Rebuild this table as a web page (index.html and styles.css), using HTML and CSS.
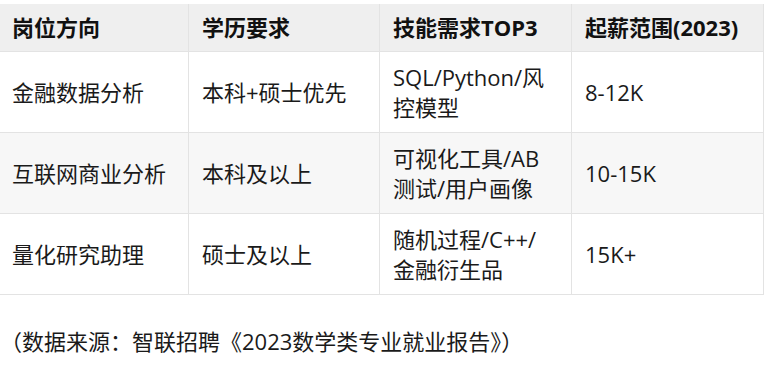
FILE: index.html
```html
<!DOCTYPE html>
<html lang="zh-CN">
<head>
<meta charset="utf-8">
<link rel="stylesheet" href="styles.css">
</head>
<body>
<table class="jobs">
  <colgroup>
    <col class="c1"><col class="c2"><col class="c3"><col class="c4">
  </colgroup>
  <thead>
    <tr><th>岗位方向</th><th>学历要求</th><th>技能需求TOP3</th><th>起薪范围(2023)</th></tr>
  </thead>
  <tbody>
    <tr><td>金融数据分析</td><td>本科+硕士优先</td><td>SQL/Python/风<br>控模型</td><td>8-12K</td></tr>
    <tr class="alt"><td>互联网商业分析</td><td>本科及以上</td><td>可视化工具/AB<br>测试/用户画像</td><td>10-15K</td></tr>
    <tr><td>量化研究助理</td><td>硕士及以上</td><td>随机过程/C++/<br>金融衍生品</td><td>15K+</td></tr>
  </tbody>
</table>
<p class="source">（数据来源：智联招聘《2023数学类专业就业报告》）</p>
</body>
</html>
```

FILE: styles.css
```css
html, body {
  margin: 0;
  padding: 0;
  background: #ffffff;
}
body {
  font-family: "Open Sans", "Noto Sans CJK SC", sans-serif;
  font-size: 22px;
  color: #1a1a1a;
}
.jobs {
  border-collapse: collapse;
  table-layout: fixed;
  width: 765px;
  margin: 4px 0 0 -2px;
}
.c1 { width: 190px; }
.c2 { width: 191px; }
.c3 { width: 192px; }
.c4 { width: 192px; }
.jobs th,
.jobs td {
  border: 1px solid #e3e3e3;
  text-align: left;
  vertical-align: middle;
  padding: 10px 13px;
  line-height: 30px;
}
.jobs th {
  background: #efefef;
  font-weight: 700;
  color: #111;
  padding: 8px 13px 9px;
  line-height: 29px;
  white-space: nowrap;
}
.jobs thead tr th {
  border-top-color: #efefef;
}
.jobs th:first-child,
.jobs td:first-child {
  border-left-color: transparent;
}
.jobs tr.alt td {
  background: #f7f7f7;
}
.source {
  margin: 31px 0 0 0;
  line-height: 30px;
}
```
